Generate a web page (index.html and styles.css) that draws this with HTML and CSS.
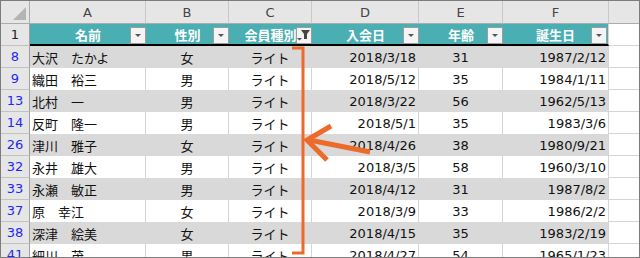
FILE: index.html
```html
<!DOCTYPE html>
<html lang="ja">
<head>
<meta charset="utf-8">
<title>会員リスト</title>
<link rel="stylesheet" href="styles.css">
</head>
<body>
<div class="frame">
  <div class="sheet">
    <div class="row">
      <div class="c corner"><svg width="28" height="22" viewBox="0 0 28 22"><polygon points="25,6 25,19 12,19" fill="#b4b4b4"/></svg></div>
      <div class="c ch">A</div>
      <div class="c ch">B</div>
      <div class="c ch">C</div>
      <div class="c ch">D</div>
      <div class="c ch">E</div>
      <div class="c ch">F</div>
      <div class="c ch last"></div>
    </div>
    <div class="row">
      <div class="c rh one">1</div>
      <div class="c th">名前<span class="btn dd"></span></div>
      <div class="c th">性別<span class="btn dd"></span></div>
      <div class="c th">会員種別<span class="btn flt"><svg width="14" height="15" viewBox="0 0 14 15"><polygon points="4,2 13,2 10,6 10,11 7,11 7,6" fill="#444"/><polygon points="0,10 5,10 2.5,12.5" fill="#555"/></svg></span></div>
      <div class="c th">入会日<span class="btn dd"></span></div>
      <div class="c th">年齢<span class="btn dd"></span></div>
      <div class="c th f">誕生日<span class="btn dd"></span></div>
      <div class="c g"></div>
    </div>
    <div class="row band">
      <div class="c rh">8</div><div class="c l">大沢　たかよ</div><div class="c m">女</div><div class="c m">ライト</div><div class="c r">2018/3/18</div><div class="c m">31</div><div class="c r f">1987/2/12</div><div class="c g"></div>
    </div>
    <div class="row">
      <div class="c rh">9</div><div class="c l">織田　裕三</div><div class="c m">男</div><div class="c m">ライト</div><div class="c r">2018/5/12</div><div class="c m">35</div><div class="c r f">1984/1/11</div><div class="c g"></div>
    </div>
    <div class="row band">
      <div class="c rh">13</div><div class="c l">北村　一</div><div class="c m">男</div><div class="c m">ライト</div><div class="c r">2018/3/22</div><div class="c m">56</div><div class="c r f">1962/5/13</div><div class="c g"></div>
    </div>
    <div class="row">
      <div class="c rh">14</div><div class="c l">反町　隆一</div><div class="c m">男</div><div class="c m">ライト</div><div class="c r">2018/5/1</div><div class="c m">35</div><div class="c r f">1983/3/6</div><div class="c g"></div>
    </div>
    <div class="row band">
      <div class="c rh">26</div><div class="c l">津川　雅子</div><div class="c m">女</div><div class="c m">ライト</div><div class="c r">2018/4/26</div><div class="c m">38</div><div class="c r f">1980/9/21</div><div class="c g"></div>
    </div>
    <div class="row">
      <div class="c rh">32</div><div class="c l">永井　雄大</div><div class="c m">男</div><div class="c m">ライト</div><div class="c r">2018/3/5</div><div class="c m">58</div><div class="c r f">1960/3/10</div><div class="c g"></div>
    </div>
    <div class="row band">
      <div class="c rh">33</div><div class="c l">永瀬　敏正</div><div class="c m">男</div><div class="c m">ライト</div><div class="c r">2018/4/12</div><div class="c m">31</div><div class="c r f">1987/8/2</div><div class="c g"></div>
    </div>
    <div class="row">
      <div class="c rh">37</div><div class="c l">原　幸江</div><div class="c m">女</div><div class="c m">ライト</div><div class="c r">2018/3/9</div><div class="c m">33</div><div class="c r f">1986/2/2</div><div class="c g"></div>
    </div>
    <div class="row band">
      <div class="c rh">38</div><div class="c l">深津　絵美</div><div class="c m">女</div><div class="c m">ライト</div><div class="c r">2018/4/15</div><div class="c m">35</div><div class="c r f">1983/2/19</div><div class="c g"></div>
    </div>
    <div class="row">
      <div class="c rh">41</div><div class="c l">細川　茂</div><div class="c m">男</div><div class="c m">ライト</div><div class="c r">2018/4/27</div><div class="c m">54</div><div class="c r f">1965/1/23</div><div class="c g"></div>
    </div>
  </div>
  <svg class="marks" width="640" height="258" viewBox="0 0 640 258">
    <path d="M292 48 H303 V253 H292" fill="none" stroke="#ee6a2b" stroke-width="3"/>
    <path d="M370 152 L309 140" fill="none" stroke="#ee6a2b" stroke-width="5" stroke-linecap="butt"/>
    <path d="M331 126 L307 140 L327 160" fill="none" stroke="#ee6a2b" stroke-width="5" stroke-linejoin="miter"/>
  </svg>
</div>
</body>
</html>
```
FILE: styles.css
```css
body {
  margin: 0;
  background: #fff;
}
.frame {
  position: relative;
  width: 640px;
  height: 258px;
  box-sizing: border-box;
  border: 1px solid #7c7c7c;
  overflow: hidden;
  background: #fff;
  font-family: "DejaVu Sans", "Noto Sans CJK JP", sans-serif;
  color: #111;
}
.sheet {
  display: grid;
  grid-template-columns: 29px 116px 83px 83px 107px 84px 106px 30px;
  grid-template-rows: 23px;
  grid-auto-rows: 22px;
}
.row {
  display: contents;
}
.c {
  box-sizing: border-box;
  display: flex;
  align-items: center;
  padding: 0 3px;
  font-size: 13px;
  white-space: nowrap;
  overflow: hidden;
  border-right: 1px solid #d4d4d4;
}
.corner {
  background: #e6e6e6;
  border-right: 1px solid #ababab;
  border-bottom: 1px solid #ababab;
  padding: 0;
  align-items: flex-end;
}
.ch {
  background: #e6e6e6;
  border-right: 1px solid #c8c8c8;
  border-bottom: 1px solid #ababab;
  justify-content: center;
  color: #444;
  font-size: 13px;
  padding-top: 1px;
}
.ch.last {
  border-right: none;
}
.rh {
  background: #e6e6e6;
  border-right: 1px solid #9e9e9e;
  border-bottom: 1px solid #c2c2c2;
  justify-content: center;
  color: #2727f2;
  padding: 0;
}
.rh.one {
  color: #222;
}
.th {
  position: relative;
  background: #4aafb2;
  color: #fff;
  font-weight: bold;
  justify-content: center;
  border-right: none;
  border-bottom: 2px solid #000;
  overflow: visible;
  padding: 0;
}
.th.f {
  border-right: 1px solid #d4d4d4;
}
.btn {
  position: absolute;
  right: 0;
  top: 3px;
  width: 16px;
  height: 17px;
  box-sizing: border-box;
  background: #f4f4f4;
  border: 1px solid #9c9c9c;
  display: flex;
  align-items: center;
  justify-content: center;
}
.th.f .btn {
  right: 1px;
}
.dd::after {
  content: "";
  width: 0;
  height: 0;
  border-left: 3px solid transparent;
  border-right: 3px solid transparent;
  border-top: 3px solid #555;
}
.flt svg {
  display: block;
}
.g {
  border-right: none;
  border-bottom: 1px solid #d4d4d4;
}
.l {
  justify-content: flex-start;
  padding-left: 2px;
}
.m {
  justify-content: center;
}
.r {
  justify-content: flex-end;
  padding-right: 2px;
}
.band .c.l,
.band .c.m,
.band .c.r {
  background: #d9d9d9;
  border-right-color: #d9d9d9;
}
.band .c.f {
  border-right-color: #d4d4d4;
}
.marks {
  position: absolute;
  left: -1px;
  top: -1px;
  pointer-events: none;
}
```
